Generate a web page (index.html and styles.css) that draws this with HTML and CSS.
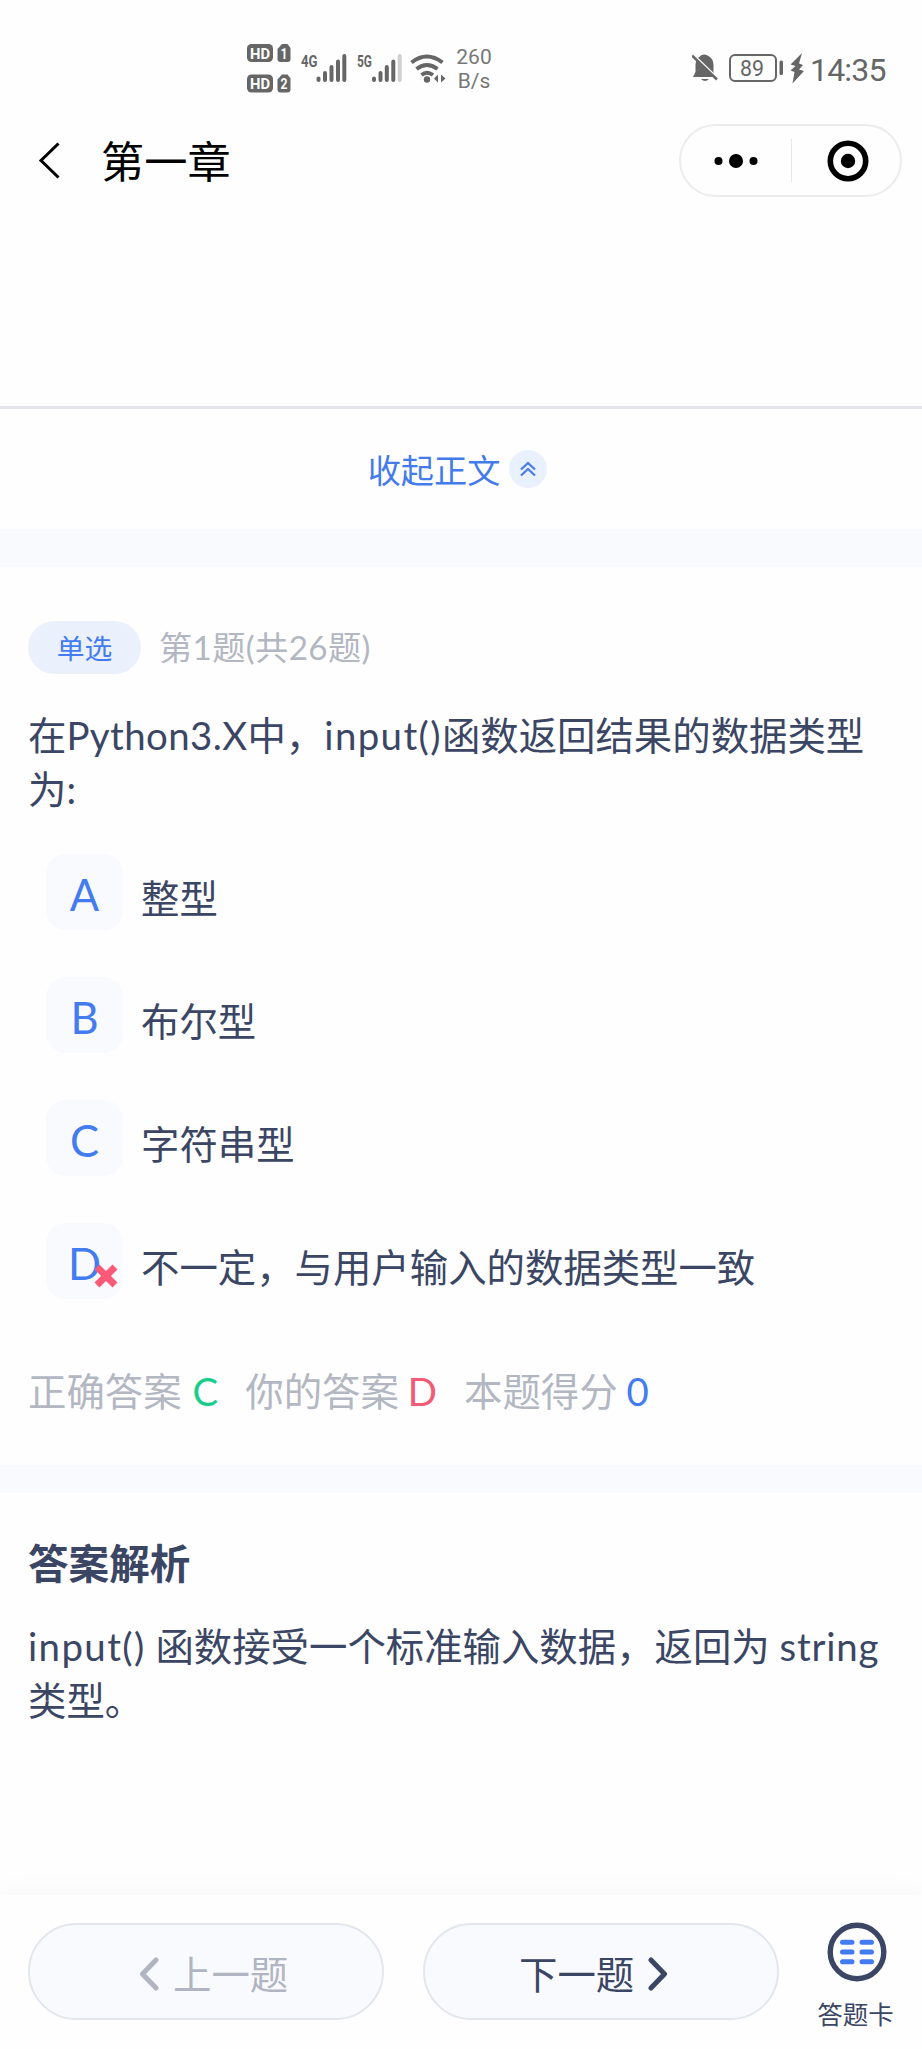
FILE: index.html
```html
<!DOCTYPE html>
<html lang="zh-CN">
<head>
<meta charset="utf-8">
<title>第一章</title>
<link rel="stylesheet" href="styles.css">
</head>
<body>
<div class="app">
  <header class="status">
    <svg class="status-signal" width="202" height="54" viewBox="0 0 202 54">
      <g fill="#666">
        <rect x="0" y="3" width="26" height="18" rx="4.5"/>
        <path d="M35 3h5.500l3 4v11q0 3-3 3h-7q-3 0-3-3v-10z"/>
        <rect x="0" y="33.500" width="26" height="18" rx="4.500"/>
        <path d="M35 33.500h5.500l3 4v11q0 3-3 3h-7q-3 0-3-3v-10z"/>
      </g>
      <g class="hd-text">
        <text x="3" y="17.500" textLength="20" lengthAdjust="spacingAndGlyphs">HD</text>
        <text x="3" y="48" textLength="20" lengthAdjust="spacingAndGlyphs">HD</text>
        <text x="33.500" y="17.500" textLength="7" lengthAdjust="spacingAndGlyphs">1</text>
        <text x="33.500" y="48" textLength="7" lengthAdjust="spacingAndGlyphs">2</text>
      </g>
      <g class="net-text">
        <text x="54" y="25.500" textLength="16.500" lengthAdjust="spacingAndGlyphs">4G</text>
        <text x="110" y="25.500" textLength="15" lengthAdjust="spacingAndGlyphs">5G</text>
      </g>
      <g stroke="#666" stroke-width="4" stroke-linecap="round">
        <path d="M71.500 37.500v1.500M78 32v7M84.500 26v13M91 20.500v18.500M97.300 15v24"/>
        <path d="M127 37.500v1.500M133.500 32v7M139.800 26v13M146.300 20.500v18.500"/>
        <path d="M152.700 15v24" stroke="#d0d0d0"/>
      </g>
      <g fill="none" stroke="#666" stroke-width="4">
        <path d="M164.500 21.500q15.200-12 31 0"/>
        <path d="M169.500 28q10.500-8 21 0"/>
        <path d="M174.500 34q5.500-4.500 11.500 0"/>
      </g>
      <circle cx="180" cy="38.500" r="3.200" fill="#666"/>
      <path d="M191 33.500v8l-4-4zM194 33.500v8l4.500-4z" fill="#666"/>
    </svg>
    <div class="speed"><span>260</span><span>B/s</span></div>
    <svg class="status-power" width="114" height="34" viewBox="0 0 114 34">
      <path d="M3.500 21V13q1-6 5-8l1-1q4-1.500 7 1q5 3 5 9v8l3 4H1zM9 28h8q-4 4-8 0z" fill="#666"/>
      <path d="M-.500 2.500l27 26" stroke="#fefefe" stroke-width="3"/>
      <path d="M0 4.500l25 24" stroke="#666" stroke-width="2.500"/>
      <rect x="38" y="4" width="46" height="26" rx="5" fill="none" stroke="#666" stroke-width="2"/>
      <rect x="87.500" y="9.500" width="3.500" height="14.500" rx="1.500" fill="#666"/>
      <text class="battery-text" x="48" y="25" textLength="24" lengthAdjust="spacingAndGlyphs">89</text>
      <path d="M110 2L98.500 13.500l5 1.500-5 4.500 4 1.500-2 11.500L112 20l-5-1.500 4-4.500-4-1.500z" fill="#666"/>
    </svg>
    <span class="clock">14:35</span>
  </header>

  <nav class="nav">
    <svg class="back" width="24" height="42" viewBox="0 0 24 42"><path d="M21.500 3.500L4 20.500l17.500 17" fill="none" stroke="#000" stroke-width="3"/></svg>
    <h1 class="title">第一章</h1>
    <div class="capsule">
      <div class="capsule-half"><svg width="44" height="16" viewBox="0 0 44 16"><circle cx="4.500" cy="8" r="4"/><circle cx="22" cy="8" r="7"/><circle cx="39.500" cy="8" r="4"/></svg></div>
      <div class="capsule-half capsule-close"><svg width="42" height="42" viewBox="0 0 42 42"><circle cx="21" cy="21" r="17.700" fill="none" stroke="#000" stroke-width="5.600"/><circle cx="21" cy="21" r="7.200"/></svg></div>
    </div>
  </nav>

  <div class="passage"></div>
  <div class="collapse">
    <span class="collapse-text">收起正文</span>
    <span class="collapse-icon"><svg width="18" height="18" viewBox="0 0 18 18"><path d="M2 9.500L9 3l7 6.500M2 15.500L9 9l7 6.500" fill="none" stroke="#4a7de8" stroke-width="2.300"/></svg></span>
  </div>
  <div class="band"></div>

  <main class="question">
    <div class="meta"><span class="tag">单选</span><span class="count">第1题(共26题)</span></div>
    <p class="stem">在<span class="stem-py">Python3.X</span>中，<span class="stem-fn">input()</span>函数返回结果的数据类型为:</p>
    <ul class="options">
      <li class="option"><span class="key">A</span><span class="label">整型</span></li>
      <li class="option"><span class="key">B</span><span class="label">布尔型</span></li>
      <li class="option"><span class="key">C</span><span class="label">字符串型</span></li>
      <li class="option"><span class="key">D<svg class="wrong" width="24" height="24" viewBox="0 0 24 24"><path d="M3 3l18 18M21 3L3 21" stroke="#fa5a78" stroke-width="7"/></svg></span><span class="label">不一定，与用户输入的数据类型一致</span></li>
    </ul>
    <div class="result">
      <span class="result-item">正确答案<b class="right">C</b></span>
      <span class="result-item">你的答案<b class="mine">D</b></span>
      <span class="result-item">本题得分<b class="score">0</b></span>
    </div>
  </main>
  <div class="band band-thin"></div>

  <section class="analysis">
    <h2 class="analysis-title">答案解析</h2>
    <p class="analysis-text"><span class="stem-fn">input()</span> 函数接受一个标准输入数据，返回为 <span class="string">string</span> 类型。</p>
  </section>

  <footer class="footer">
    <div class="btn btn-prev"><svg width="20" height="34" viewBox="0 0 20 34"><path d="M17 3L3.500 17 17 31" fill="none" stroke="#b0b5c1" stroke-width="5" stroke-linecap="round" stroke-linejoin="round"/></svg><span>上一题</span></div>
    <div class="btn btn-next"><span>下一题</span><svg width="20" height="34" viewBox="0 0 20 34"><path d="M3 3l13.500 14L3 31" fill="none" stroke="#3b4665" stroke-width="5" stroke-linecap="round" stroke-linejoin="round"/></svg></div>
    <div class="card">
      <svg width="60" height="60" viewBox="0 0 60 60"><circle cx="30" cy="30" r="26.800" fill="none" stroke="#3b4665" stroke-width="5.400"/><path d="M15.500 20.300h9.500M35 20.300h9.500M15.500 30h9.500M35 30h9.500M15.500 39.700h9.500M35 39.700h9.500" stroke="#437bf0" stroke-width="5" stroke-linecap="round"/></svg>
      <span>答题卡</span>
    </div>
  </footer>
</div>
</body>
</html>
```
FILE: styles.css
```css
* { box-sizing: border-box; margin: 0; padding: 0; }
body {
  width: 922px;
  height: 2049px;
  background: #fefefe;
  color: #3b4665;
  font-family: Lato, "Noto Sans CJK SC", sans-serif;
  font-size: 38.4px;
}
.app { display: flex; flex-direction: column; height: 2049px; overflow: hidden; }

.status { display: flex; align-items: flex-start; height: 110px; padding: 41px 0 0 247px; }
.hd-text { fill: #fff; font: 700 15px Roboto, sans-serif; }
.net-text { fill: #666; font: 700 16px Roboto, sans-serif; }
.speed { display: flex; flex-direction: column; align-items: center; width: 34px; margin: 4px 0 0 8px; color: #777; font: 21px/24px Roboto, sans-serif; }
.status-power { margin: 10px 0 0 201px; }
.battery-text { fill: #666; font: 22px Roboto, sans-serif; }
.clock { margin: 10px 0 0 4px; color: #666; font: 32px/38px Roboto, sans-serif; letter-spacing: -0.8px; }

.nav { display: flex; align-items: center; height: 100px; padding: 1px 20px 0 37px; }
.title { margin: 1px 0 0 40px; color: #000; font-size: 43.2px; font-weight: 400; line-height: 60px; }
.capsule { display: flex; width: 223px; height: 73px; margin-left: auto; border: 2px solid #ececee; border-radius: 37px; }
.capsule-half { display: flex; align-items: center; justify-content: center; width: 110px; }
.capsule-close { position: relative; }
.capsule-close::before { content: ""; position: absolute; left: 0; top: 13px; width: 1px; height: 43px; background: #e6e6e8; }
.capsule-close svg { margin-left: 5px; }

.passage { height: 199px; border-bottom: 3px solid #e4e5ea; }
.collapse { display: flex; align-items: center; justify-content: center; height: 120px; padding: 2px 6px 0 0; color: #437bea; font-size: 33.2px; }
.collapse-text { margin: -4px 0 0 -1px; }
.collapse-icon { display: flex; align-items: center; justify-content: center; width: 38px; height: 38px; margin: -3px 0 0 9px; border-radius: 50%; background: #eaf1fe; }
.band { height: 38px; background: #f9fafe; }
.band-thin { height: 28px; }

.question { height: 898px; padding: 54px 28px 0; }
.meta { display: flex; align-items: center; height: 53px; }
.tag { width: 113px; height: 53px; border-radius: 27px; background: #eaf1fd; color: #437bf0; font-size: 27.8px; line-height: 55px; text-align: center; }
.count { margin: -2px 0 0 18px; color: #b2b7c2; font-size: 33.2px; line-height: 50px; letter-spacing: 0.4px; }
.stem { margin-top: 35px; line-height: 53.8px; }
.stem-py { letter-spacing: 0.4px; }
.stem-fn { letter-spacing: 1.4px; }

.options { display: flex; flex-direction: column; gap: 47px; margin: 37.5px 0 0 18px; list-style: none; }
.option { display: flex; align-items: center; height: 76px; }
.key { position: relative; width: 77px; height: 76px; border-radius: 20px; background: #f9fafe; color: #437bf0; font-size: 43.5px; line-height: 80px; text-align: center; }
.wrong { position: absolute; right: 5px; bottom: 11px; }
.label { margin: 12px 0 0 18px; line-height: 54px; }
.result { display: flex; margin-top: 65px; color: #b2b7c2; line-height: 54px; }
.result-item { margin-right: 27px; white-space: nowrap; }
.result-item b { margin-left: 11px; font-weight: 400; }
.result-item .right { color: #1bcd8b; }
.result-item .mine { margin-left: 9px; color: #f35a76; }
.result-item .score { margin-left: 9px; color: #437bf0; }

.analysis { height: 402px; padding: 41px 28px 0; }
.analysis-title { font-size: 40.6px; font-weight: 700; line-height: 60px; }
.analysis-text { margin-top: 26px; line-height: 53.8px; }
.string { letter-spacing: 0.8px; }

.footer { display: flex; height: 154px; padding: 28px 0 0 28px; box-shadow: 0 -4px 24px rgba(60, 60, 80, 0.03); }
.btn { display: flex; align-items: center; width: 356px; height: 97px; padding-top: 4px; border: 2px solid #e4e6ee; border-radius: 49px; background: #f9fafe; }
.btn span { margin-top: -4px; }
.btn-prev { padding-left: 109px; gap: 14px; color: #b0b5c1; }
.btn-next { margin-left: 39px; padding-left: 94px; gap: 14px; }
.card { display: flex; flex-direction: column; align-items: center; width: 80px; margin-left: 38px; font-size: 25.5px; line-height: 36px; }
.card svg { margin-top: -1px; }
.card span { margin: 14px 3px 0 0; }
```
